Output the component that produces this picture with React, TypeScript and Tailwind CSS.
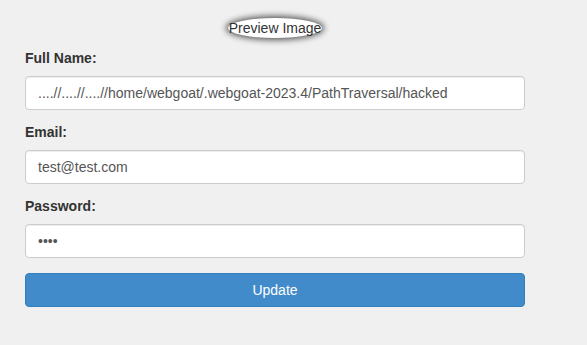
import React from 'react';

export default function App() {
  const fields = [
    { label: 'Full Name:', type: 'text', value: '....//....//....//home/webgoat/.webgoat-2023.4/PathTraversal/hacked' },
    { label: 'Email:', type: 'text', value: 'test@test.com' },
    { label: 'Password:', type: 'password', value: 'test' },
  ];

  return (
    <div className="min-h-[345px] bg-[#f0f0f0] pl-[25px] pt-[18px] font-['Liberation_Sans',Arial,sans-serif] text-[14px] text-[#333]">
      <div className="w-[500px]">
        {/* Broken preview image */}
        <div className="flex justify-center h-5 mb-[10px]">
          <span className="inline-block h-5 px-[1px] leading-5 bg-white rounded-[50%] shadow-[0_0_6px_2px_rgba(0,0,0,0.65)] text-[#333]">
            Preview Image
          </span>
        </div>

        {fields.map((f) => (
          <div key={f.label} className="mb-3">
            <label className="block h-5 leading-5 mb-2 font-bold">{f.label}</label>
            <input
              type={f.type}
              defaultValue={f.value}
              readOnly
              className="block w-full h-[34px] px-3 bg-white border border-[#ccc] rounded-[4px] text-[14px] text-[#555] shadow-[inset_0_1px_1px_rgba(0,0,0,0.075)] outline-none"
            />
          </div>
        ))}

        <button className="mt-[15px] block w-full h-[34px] bg-[#428bca] border border-[#357ebd] rounded-[4px] text-white text-[14px]">
          Update
        </button>
      </div>
    </div>
  );
}
